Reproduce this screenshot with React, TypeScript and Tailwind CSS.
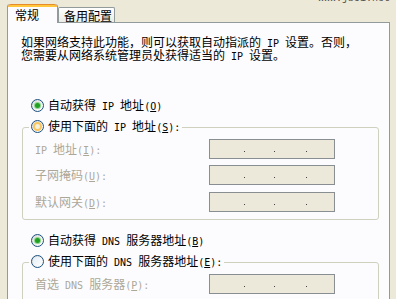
import React from "react";

function Txt({ s }: { s: string }) {
  // "&X" marks an underlined mnemonic char; ASCII runs use a half-width mono face
  const parts = s.split(/([\x20-\x7e]+)/).filter((p) => p.length > 0);
  return (
    <>
      {parts.map((p, i) => {
        const ascii = /^[\x20-\x7e]+$/.test(p);
        if (!ascii) return <span key={i}>{p}</span>;
        const idx = p.indexOf("&");
        if (idx >= 0) {
          const a = p.slice(0, idx);
          const c = p.slice(idx + 1, idx + 2);
          const b = p.slice(idx + 2);
          return (
            <span key={i} className="font-['DejaVu_Sans_Mono',monospace] text-[10px] leading-none whitespace-pre">
              {a}
              <span className="underline underline-offset-[1px]">{c}</span>
              {b}
            </span>
          );
        }
        return (
          <span key={i} className="font-['DejaVu_Sans_Mono',monospace] text-[10px] leading-none whitespace-pre">
            {p}
          </span>
        );
      })}
    </>
  );
}

function Radio({ kind }: { kind: "checked" | "hover" | "plain" }) {
  return (
    <span className="flex h-[13px] w-[13px] shrink-0 items-center justify-center rounded-full border border-[#1c5180] bg-gradient-to-br from-[#dcdcd7] to-white">
      {kind === "checked" && (
        <span className="h-[5px] w-[5px] rounded-full bg-[#21a121] shadow-[0_0_0_1px_#8fd68f]" />
      )}
      {kind === "hover" && (
        <span className="h-[9px] w-[9px] rounded-full bg-[#f4f0da] shadow-[inset_0_0_0_2px_#f8c55e]" />
      )}
      {kind === "plain" && (
        <span className="h-[9px] w-[9px] rounded-full bg-gradient-to-br from-[#e4edf6] to-white" />
      )}
    </span>
  );
}

function IpBox() {
  return (
    <div className="flex h-[20px] w-[126px] shrink-0 items-start border border-[#888e92] bg-[#ede9da] pt-[11px]">
      <span className="w-[34px]" />
      <span className="h-px w-px bg-[#444]" />
      <span className="w-[29px]" />
      <span className="h-px w-px bg-[#444]" />
      <span className="w-[31px]" />
      <span className="h-px w-px bg-[#444]" />
    </div>
  );
}

function Row({ label, className }: { label: string; className?: string }) {
  return (
    <div className={"flex h-[20px] items-center pl-[6px] " + (className ?? "")}>
      <span className="flex h-[14px] w-[174px] shrink-0 items-center whitespace-nowrap text-[#aca899]">
        <span>
          <Txt s={label} />
        </span>
      </span>
      <IpBox />
    </div>
  );
}

export default function App() {
  return (
    <div className="relative h-[299px] w-[396px] overflow-hidden bg-[#ece9d8] pt-[4px] font-['Noto_Sans_CJK_SC',sans-serif] text-[12px] leading-[14px] text-black">
      {/* watermark */}
      <div className="absolute right-[6px] top-[-7px] font-['Liberation_Mono',monospace] text-[10px] leading-[12px] text-[#555]">
        www.jb51.net
      </div>

      {/* tabs */}
      <div className="relative z-10 flex h-[19px] items-end pl-[7px]">
        <div className="flex h-[19px] w-[51px] flex-col rounded-t-[3px] border-x border-[#919b9c] bg-[#fcfcfe]">
          <div className="h-[3px] rounded-t-[3px] border-t border-[#e68b2c] bg-[#ffc73c]" />
          <div className="flex h-[15px] items-center pl-[7px]">
            <span>常规</span>
          </div>
        </div>
        <div className="mb-px flex h-[15px] w-[57px] items-center rounded-t-[2px] border-x border-t border-[#919b9c] bg-gradient-to-b from-white to-[#ecebe5] pl-[5px] pt-[1px] leading-[13px]">
          <span>备用配置</span>
        </div>
      </div>

      {/* panel */}
      <div className="ml-[7px] -mt-px h-[290px] w-[383px] border border-[#919b9c] bg-[#fcfcfe]">
        <div className="whitespace-nowrap pl-[13px] pt-[12px]">
          <div className="flex h-[13px] items-center">
            <span>
              <Txt s="如果网络支持此功能，则可以获取自动指派的 IP 设置。否则，" />
            </span>
          </div>
          <div className="flex h-[13px] items-center">
            <span>
              <Txt s="您需要从网络系统管理员处获得适当的 IP 设置。" />
            </span>
          </div>
        </div>

        <div className="ml-[23px] mt-[37px] flex h-[14px] items-center gap-[4px] whitespace-nowrap">
          <Radio kind="checked" />
          <span>
            <Txt s="自动获得 IP 地址(&O)" />
          </span>
        </div>

        <fieldset className="ml-[14px] mt-[7px] w-[357px] rounded-[3px] border border-[#d0d0bf] pb-[7px] pl-[6px]">
          <legend className="px-[2px] pb-[2px]">
            <div className="flex h-[14px] items-center gap-[4px] whitespace-nowrap">
              <Radio kind="hover" />
              <span>
                <Txt s="使用下面的 IP 地址(&S):" />
              </span>
            </div>
          </legend>
          <Row label="IP 地址(&I):" className="mt-[4px]" />
          <Row label="子网掩码(&U):" className="mt-[6px]" />
          <Row label="默认网关(&D):" className="mt-[7px]" />
        </fieldset>

        <div className="ml-[23px] mt-[13px] flex h-[14px] items-center gap-[4px] whitespace-nowrap">
          <Radio kind="checked" />
          <span>
            <Txt s="自动获得 DNS 服务器地址(&B)" />
          </span>
        </div>

        <fieldset className="ml-[14px] mt-[7px] w-[357px] rounded-[3px] border border-[#d0d0bf] pb-[7px] pl-[6px]">
          <legend className="px-[2px] pb-[2px]">
            <div className="flex h-[14px] items-center gap-[4px] whitespace-nowrap">
              <Radio kind="plain" />
              <span>
                <Txt s="使用下面的 DNS 服务器地址(&E):" />
              </span>
            </div>
          </legend>
          <Row label="首选 DNS 服务器(&P):" className="mt-[4px]" />
        </fieldset>
      </div>
    </div>
  );
}
